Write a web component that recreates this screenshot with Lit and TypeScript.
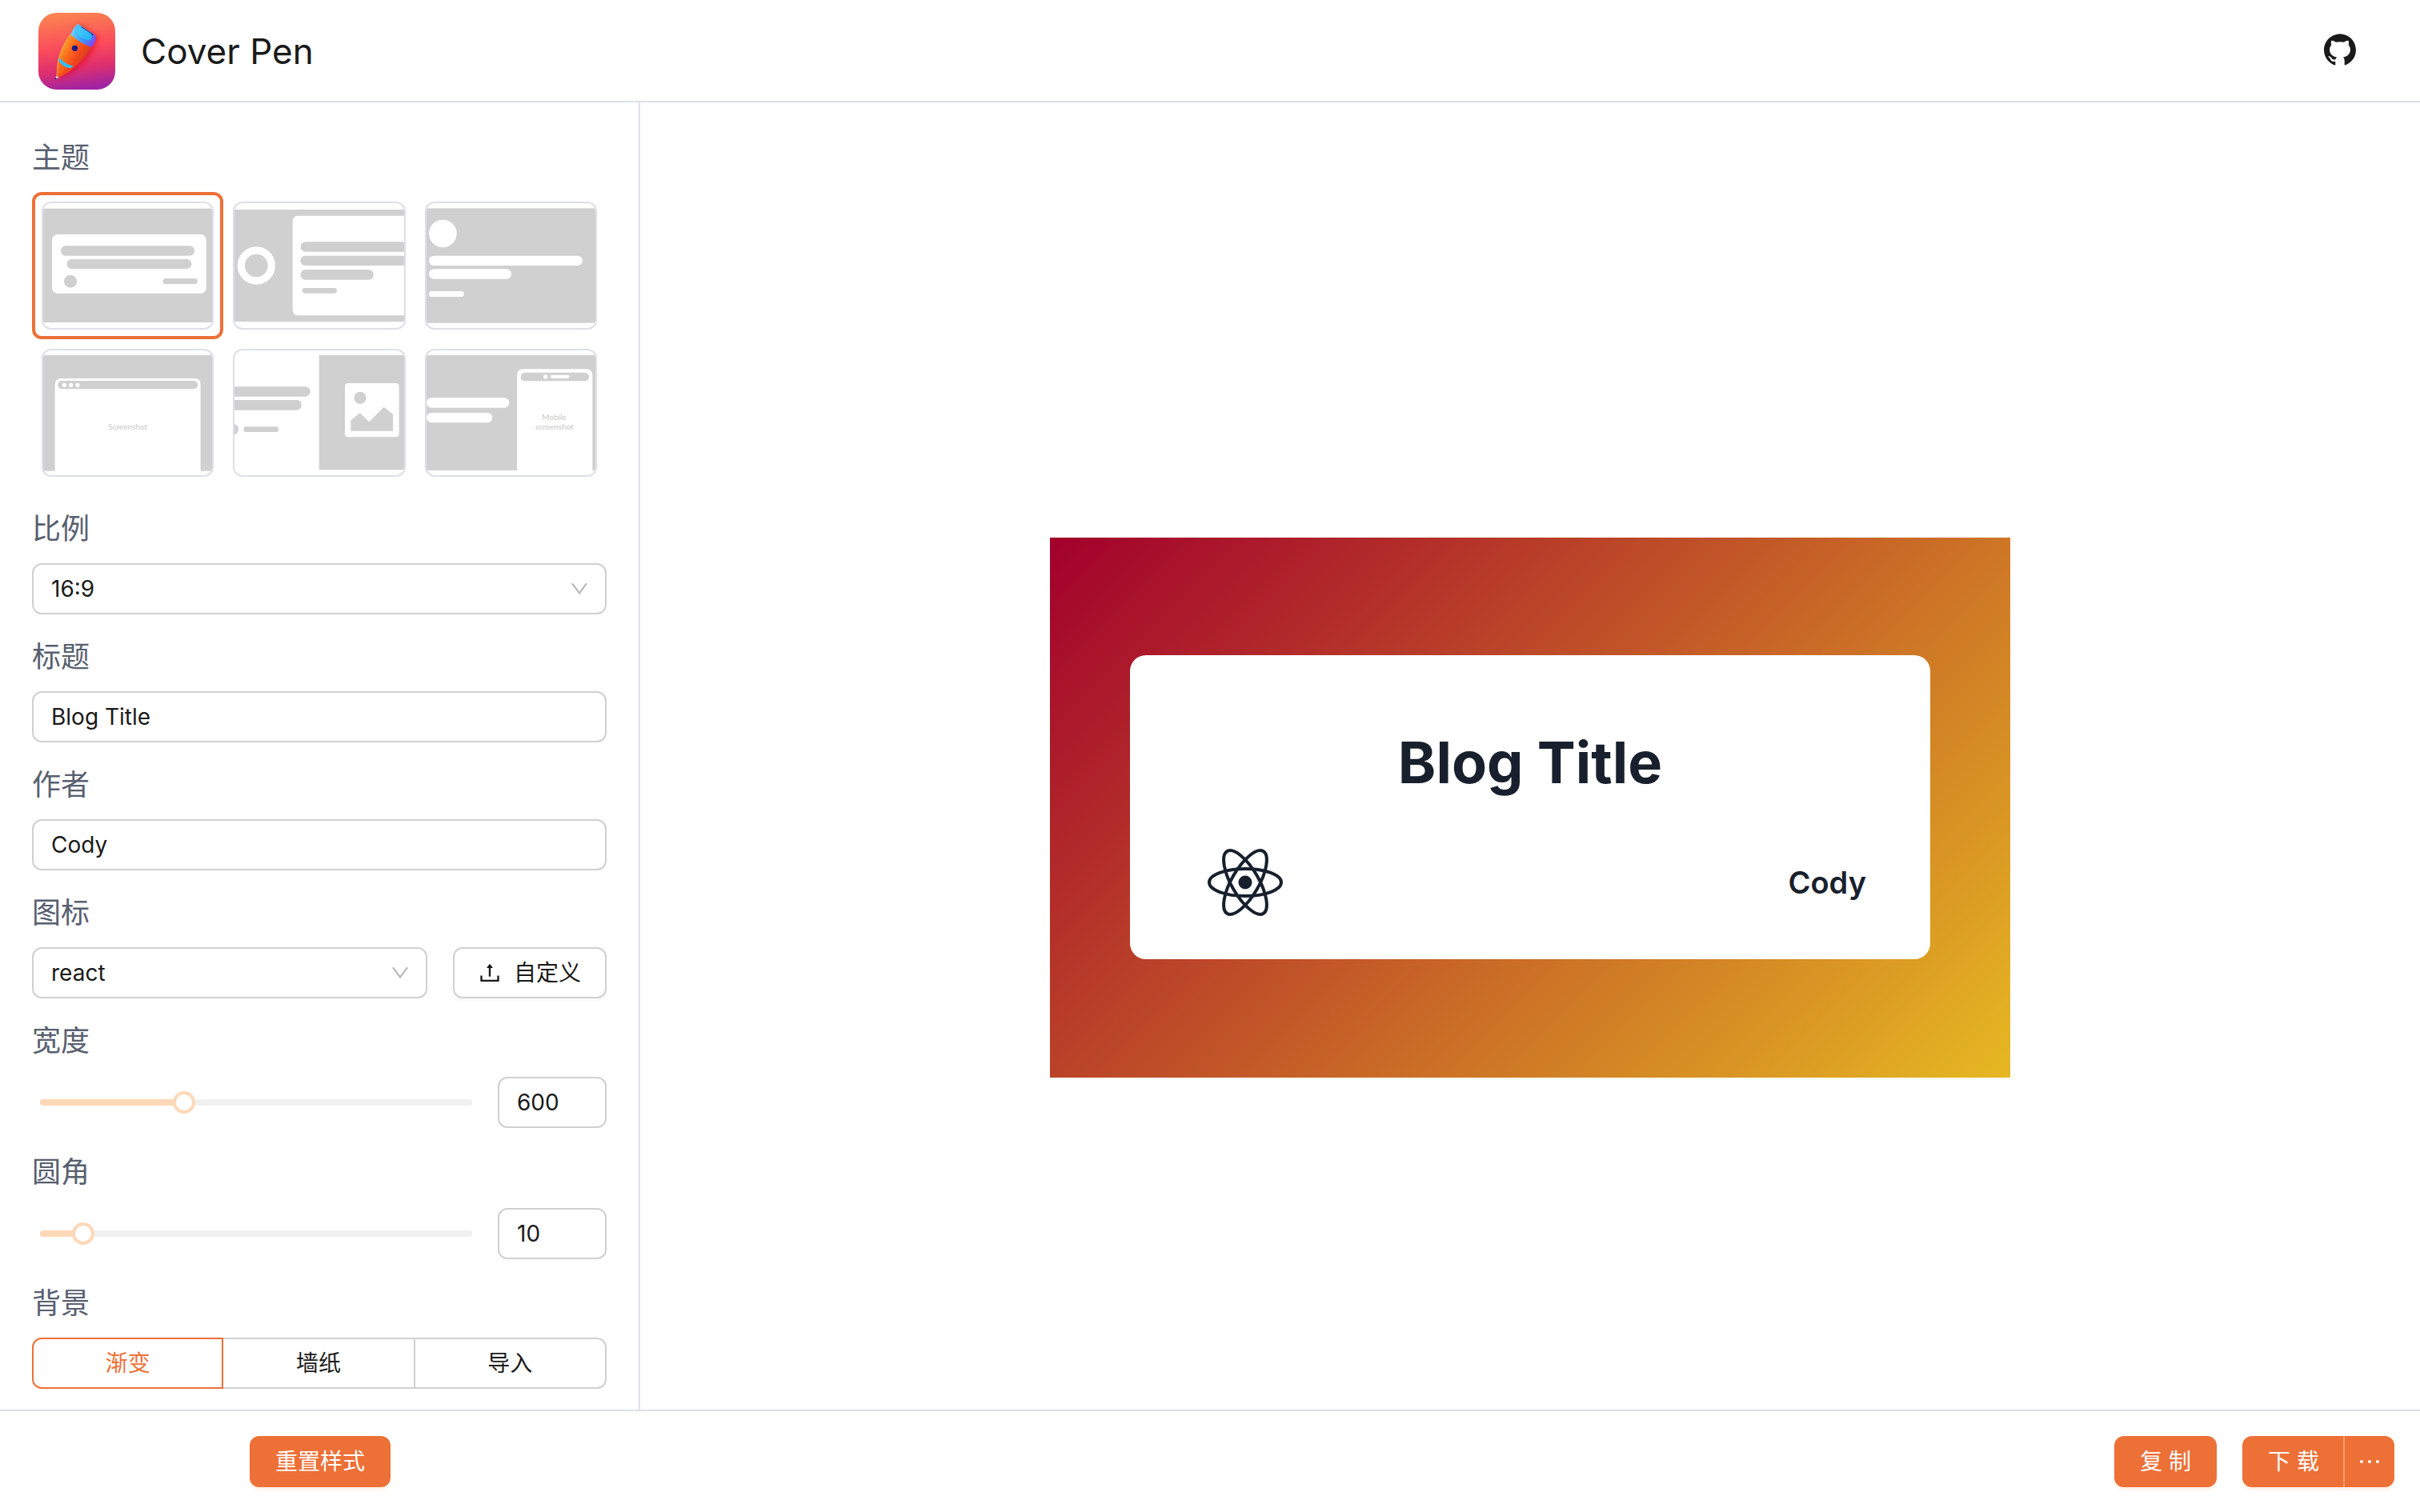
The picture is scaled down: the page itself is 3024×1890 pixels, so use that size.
import { LitElement, html, css, svg } from "lit";
import { customElement, state } from "lit/decorators.js";
import { classMap } from "lit/directives/class-map.js";

const DOWN =
  "M884 256h-75c-5.1 0-9.9 2.5-12.9 6.6L512 654.2 227.9 262.6c-3-4.1-7.8-6.6-12.9-6.6h-75c-6.5 0-10.3 7.4-6.5 12.7l352.6 486.1c12.8 17.6 39 17.6 51.7 0l352.6-486.1c3.9-5.3.1-12.7-6.4-12.7z";
const UPLOAD =
  "M400 317.7h73.9V656c0 4.4 3.6 8 8 8h60c4.4 0 8-3.6 8-8V317.7H624c6.7 0 10.4-7.7 6.3-12.9L518.3 163a8 8 0 00-12.6 0l-112 141.7c-4.1 5.3-.4 13 6.3 13zM878 626h-60c-4.4 0-8 3.6-8 8v154H214V634c0-4.4-3.6-8-8-8h-60c-4.4 0-8 3.6-8 8v198c0 17.7 14.3 32 32 32h684c17.7 0 32-14.3 32-32V634c0-4.4-3.6-8-8-8z";
const GITHUB =
  "M511.6 76.3C264.3 76.2 64 276.4 64 523.5 64 718.9 189.3 885 363.8 946c23.5 5.9 19.9-10.8 19.9-22.2v-77.5c-135.7 15.9-141.2-73.9-150.3-88.9C215 726 171.5 718 184.5 703c30.9-15.9 62.4 4 98.9 57.9 26.4 39.1 77.9 32.5 104 26 5.7-23.5 17.9-44.5 34.7-60.8-140.6-25.2-199.2-111-199.2-213 0-49.5 16.3-95 48.3-131.7-20.4-60.5 1.9-112.3 4.9-120 58.1-5.2 118.5 41.6 123.2 45.3 33-8.9 70.7-13.6 112.9-13.6 42.4 0 80.2 4.9 113.5 13.9 11.3-8.6 67.3-48.8 121.3-43.9 2.9 7.7 24.7 58.3 5.5 118 32.4 36.8 48.9 82.7 48.9 132.3 0 102.2-59 188.1-200 212.9a127.5 127.5 0 0138.1 91v112.5c.8 9 0 17.9 15 17.9 177.1-59.7 304.6-227 304.6-424.1 0-247.2-200.4-447.3-447.5-447.3z";

const icon = (path: string, name: string) => html`
  <svg class=${name} viewBox="64 64 896 896" fill="currentColor" aria-hidden="true"><path d=${path}></path></svg>
`;

const logo = html`
  <svg class="logo" viewBox="0 0 288 288" aria-hidden="true">
    <defs>
      <linearGradient id="bg" x1="0.42" y1="0" x2="0.56" y2="1">
        <stop offset="0" stop-color="#fb8350"></stop>
        <stop offset="0.45" stop-color="#fa4a5c"></stop>
        <stop offset="0.72" stop-color="#df2f6e"></stop>
        <stop offset="1" stop-color="#9d23a6"></stop>
      </linearGradient>
      <linearGradient id="body" gradientUnits="userSpaceOnUse" x1="88" y1="120" x2="170" y2="170">
        <stop offset="0" stop-color="#fba22c"></stop>
        <stop offset="0.4" stop-color="#fb6a1c"></stop>
        <stop offset="0.75" stop-color="#f9491c"></stop>
        <stop offset="1" stop-color="#d8401f"></stop>
      </linearGradient>
      <linearGradient id="cap" gradientUnits="userSpaceOnUse" x1="128" y1="64" x2="208" y2="112">
        <stop offset="0" stop-color="#6fd0fb"></stop>
        <stop offset="0.55" stop-color="#3f9cfb"></stop>
        <stop offset="1" stop-color="#7a49f5"></stop>
      </linearGradient>
      <linearGradient id="shine" gradientUnits="userSpaceOnUse" x1="140" y1="56" x2="196" y2="98">
        <stop offset="0" stop-color="#4fcbff"></stop>
        <stop offset="1" stop-color="#22b4f5"></stop>
      </linearGradient>
      <filter id="soft" x="-40%" y="-40%" width="180%" height="180%"><feGaussianBlur stdDeviation="9"></feGaussianBlur></filter>
      <clipPath id="tile"><rect width="288" height="288" rx="68"></rect></clipPath>
    </defs>
    <g clip-path="url(#tile)">
      <rect width="288" height="288" fill="url(#bg)"></rect>
      <path d="M152 42L226 92L206 140C180 186 140 220 76 246L90 170Z" fill="#e8001c" opacity="0.6" filter="url(#soft)"></path>
      <path d="M121 80C98 110 76 150 71 196L68 240L74 243C96 234 118 220 138 200C166 178 188 150 200 128Z" fill="url(#body)"></path>
      <path d="M121 80C98 110 78 150 72 196L69 238" fill="none" stroke="#fdc04c" stroke-width="3" opacity="0.7"></path>
      <path d="M158 146C142 178 112 216 76 240" fill="none" stroke="#d93818" stroke-width="8" opacity="0.35"></path>
      <path d="M79 168C92 184 110 195 131 199L121 208C102 206 86 196 76 180Z" fill="#35bdf3"></path>
      <path d="M68 236L77 242L65 249L61 251Z" fill="#d9c7d8"></path>
      <path d="M64 243L69 248L61 251Z" fill="#2b1c5a"></path>
      <path d="M146 42Q150 42 154 45L208 80Q217 87 216 94Q213 116 199 129Q158 116 120 81Q130 58 146 42Z" fill="url(#cap)"></path>
      <path d="M161 51L202 79L206 85L196 84L160 59Z" fill="#221a6c"></path>
      <path d="M148 48Q153 47 158 52L196 77Q203 82 200 91Q198 104 186 104Q160 98 143 82Q136 76 139 66Q142 54 148 48Z" fill="url(#shine)" stroke="#2d86e8" stroke-width="1"></path>
      <circle cx="136.500" cy="133" r="11" fill="#1b1a86"></circle>
    </g>
  </svg>
`;

interface Theme {
  name: string;
  box: string;
  art: unknown;
}

const G = "#d0d0d0";

const themes: Theme[] = [
  {
    name: "modern",
    box: "102 102 634 468",
    art: svg`
      <rect x="90" y="122" width="660" height="427" fill=${G} />
      <rect x="135" y="219" width="578" height="221" rx="20" fill="#fff" />
      <rect x="168" y="262" width="501" height="37" rx="18" fill=${G} />
      <rect x="190" y="312" width="468" height="36" rx="18" fill=${G} />
      <circle cx="204" cy="395" r="24" fill=${G} />
      <rect x="551" y="384" width="129" height="21" rx="10" fill=${G} />`,
  },
  {
    name: "stylish",
    box: "819 102 636 468",
    art: svg`
      <rect x="800" y="126" width="680" height="420" fill=${G} />
      <rect x="1038" y="149" width="480" height="374" rx="20" fill="#fff" />
      <circle cx="902" cy="336" r="57" fill="none" stroke="#fff" stroke-width="28" />
      <rect x="1068" y="247" width="400" height="37" rx="18" fill=${G} />
      <rect x="1067" y="299" width="400" height="37" rx="18" fill=${G} />
      <rect x="1068" y="351" width="273" height="38" rx="18" fill=${G} />
      <rect x="1074" y="420" width="130" height="20" rx="10" fill=${G} />`,
  },
  {
    name: "basic",
    box: "99 102 634 468",
    art: svg`
      <rect x="80" y="121" width="680" height="430" fill=${G} />
      <circle cx="160" cy="216" r="52" fill="#fff" />
      <rect x="108" y="299" width="576" height="37" rx="18" fill="#fff" />
      <rect x="108" y="349" width="309" height="37" rx="18" fill="#fff" />
      <rect x="108" y="432" width="131" height="21" rx="10" fill="#fff" />`,
  },
  {
    name: "preview",
    box: "102 54 634 468",
    art: svg`
      <rect x="90" y="72" width="660" height="434" fill=${G} />
      <path d="M146 540V182Q146 159 169 159H669Q692 159 692 182V540Z" fill="#fff" />
      <rect x="157" y="168" width="524" height="31" rx="15" fill=${G} />
      <circle cx="181" cy="184" r="8" fill="#fff" />
      <circle cx="206" cy="184" r="8" fill="#fff" />
      <circle cx="231" cy="184" r="8" fill="#fff" />
      <text class="art-text" x="419" y="351">Screenshot</text>`,
  },
  {
    name: "background",
    box: "819 54 636 468",
    art: svg`
      <rect x="1137" y="72" width="360" height="430" fill=${G} />
      <rect x="780" y="190" width="324" height="37" rx="18" fill=${G} />
      <rect x="780" y="240" width="291" height="38" rx="18" fill=${G} />
      <circle cx="814" cy="350" r="21" fill=${G} />
      <rect x="854" y="340" width="131" height="20" rx="10" fill=${G} />
      <rect x="1234" y="177" width="203" height="202" rx="12" fill="#fff" />
      <circle cx="1291" cy="232" r="23" fill=${G} />
      <path d="M1256 356V316L1290 289L1325 322L1380 266L1414 293V356Z" fill=${G} />`,
  },
  {
    name: "mobile",
    box: "99 54 634 468",
    art: svg`
      <rect x="80" y="72" width="680" height="432" fill=${G} />
      <rect x="99" y="232" width="310" height="37" rx="18" fill="#fff" />
      <rect x="99" y="288" width="247" height="37" rx="18" fill="#fff" />
      <path d="M438 540V148Q438 124 462 124H697Q721 124 721 148V540Z" fill="#fff" />
      <rect x="452" y="137" width="256" height="32" rx="16" fill=${G} />
      <circle cx="545" cy="153" r="8" fill="#fff" />
      <rect x="564" y="146" width="70" height="13" rx="5" fill="#fff" />
      <text class="art-text" x="577" y="314">Mobile</text>
      <text class="art-text" x="579" y="350">screenshot</text>`,
  },
];

const backgrounds = ["渐变", "墙纸", "导入"];

@customElement("app-root")
export class AppRoot extends LitElement {
  @state() private theme = "modern";
  @state() private heading = "Blog Title";
  @state() private author = "Cody";
  @state() private coverWidth = 600;
  @state() private radius = 10;
  @state() private background = "渐变";

  static styles = css`
    :host {
      display: block;
      color: #1a1a1a;
      background: #fff;
      font-family: Inter, "Noto Sans CJK SC", "Liberation Sans", sans-serif;
      font-size: 28px;
      line-height: 44px;
    }
    *, *::before, *::after { box-sizing: border-box; }
    svg { display: block; }
    button, input, select { font: inherit; color: inherit; margin: 0; }
    button { cursor: pointer; }

    .page { display: grid; grid-template-rows: auto 1fr auto; min-height: 100vh; }
    .header {
      display: flex; align-items: center; justify-content: space-between;
      padding: 16px 80px 14px 48px; border-bottom: 2px solid #dde0e7;
    }
    .brand { display: flex; align-items: center; gap: 32px; }
    .logo { width: 96px; height: 96px; }
    .brand-name { margin: 0; font-size: 44px; line-height: 64px; font-weight: 400; }
    .github { padding-bottom: 4px; color: #1a1a1a; }
    .github-icon { width: 40px; height: 40px; }

    .main { display: grid; grid-template-columns: 800px 1fr; }
    .sidebar { padding: 16px 40px 24px; border-right: 2px solid #dde0e7; }
    .field { margin: 0; padding: 0; border: 0; min-width: 0; }
    .label {
      display: block; padding: 25px 0 15px;
      font-size: 36px; line-height: 56px; color: #586070;
    }

    .themes { display: grid; grid-template-columns: repeat(3, 1fr); }
    .theme {
      padding: 8px; border: 4px solid transparent; border-radius: 12px; background: none;
    }
    .theme.active { border-color: #ed7037; }
    .thumb {
      width: 100%; height: 160px; border: 2px solid #dde0e7; border-radius: 12px; background: #fff;
    }
    .art-text {
      font-family: Lato, "Open Sans", sans-serif; font-size: 30px; fill: #c8c8c8; text-anchor: middle;
    }

    .box {
      width: 100%; height: 64px; padding: 0 22px;
      border: 2px solid #d0d0d0; border-radius: 12px; background: #fff; outline: none;
    }
    .select { display: grid; align-items: center; flex: 1; }
    .select > * { grid-area: 1 / 1; }
    .select .box { appearance: none; }
    .chevron {
      justify-self: end; width: 24px; height: 24px; margin-right: 22px;
      color: #b8b8b8; pointer-events: none;
    }
    .row { display: flex; align-items: center; gap: 32px; }
    .upload {
      display: flex; align-items: center; gap: 16px; height: 64px; padding: 0 30px;
      border: 2px solid #d0d0d0; border-radius: 12px; background: #fff;
      box-shadow: 0 4px 0 rgba(0, 0, 0, 0.02); white-space: nowrap;
    }
    .upload-icon { width: 28px; height: 28px; }

    .slider-row { min-height: 68px; padding-left: 10px; }
    .slider { display: grid; align-items: center; flex: 1; }
    .slider > * { grid-area: 1 / 1; }
    .rail { height: 8px; border-radius: 4px; background: #f0f0f0; overflow: hidden; }
    .fill { height: 8px; background: #ffd8b8; }
    .range { appearance: none; height: 28px; margin: 0 -14px; background: none; outline: none; }
    .range::-webkit-slider-thumb {
      appearance: none; width: 28px; height: 28px;
      border: 4px solid #ffd8b8; border-radius: 50%; background: #fff;
    }
    .number { flex: none; width: 136px; appearance: textfield; }
    .number::-webkit-inner-spin-button { appearance: none; margin: 0; }

    .segments { display: grid; grid-template-columns: repeat(3, 1fr); }
    .segment {
      display: flex; align-items: center; justify-content: center; height: 64px;
      border: 2px solid #d0d0d0; border-left-width: 0; cursor: pointer;
    }
    .segment:first-child { border-left-width: 2px; border-radius: 12px 0 0 12px; }
    .segment:last-child { border-radius: 0 12px 12px 0; }
    .segment.active { border-color: #ed7037; color: #ed7037; }
    .segment input { appearance: none; width: 0; height: 0; }

    .stage { display: grid; place-items: center; padding-top: 128px; }
    .cover {
      display: grid; place-items: center; aspect-ratio: 16 / 9;
      background: linear-gradient(135deg, #a2002c, #e6b822);
    }
    .card {
      width: 1000px; padding: 80px 80px 32px; border-radius: 20px;
      background: #fff; color: #18202d;
    }
    .cover-title { margin: 0 0 32px; font-size: 72px; line-height: 108px; font-weight: 700; text-align: center; }
    .card-foot { display: flex; align-items: center; justify-content: space-between; }
    .react { width: 128px; height: 128px; }
    .cover-author { margin: 0; font-size: 38px; line-height: 56px; font-weight: 600; }

    .footer {
      display: grid; grid-template-columns: 800px 1fr; align-items: center;
      min-height: 128px; border-top: 2px solid #dde0e7;
    }
    .reset { display: flex; justify-content: center; }
    .actions { display: flex; justify-content: flex-end; gap: 32px; padding-right: 32px; }
    .primary {
      height: 64px; padding: 0 32px; border: 0; border-radius: 12px;
      background: #ed7037; color: #fff; box-shadow: 0 4px 0 #fff5ec; white-space: nowrap;
    }
    .split { display: flex; }
    .split .primary:first-child { padding-right: 30px; border-radius: 12px 0 0 12px; border-right: 2px solid #ff9d60; }
    .split .primary:last-child { border-radius: 0 12px 12px 0; padding: 0 15px; }
    .more-icon { width: 32px; height: 32px; }
  `;

  private slider(id: string, label: string, value: number, min: number, max: number, set: (n: number) => void) {
    const onInput = (e: Event) => set(Number((e.target as HTMLInputElement).value));
    return html`
      <div class="field">
        <label class="label" for=${id}>${label}</label>
        <div class="row slider-row">
          <div class="slider">
            <div class="rail"><div class="fill" style="width:${((value - min) / (max - min)) * 100}%"></div></div>
            <input class="range" id=${id} type="range" min=${min} max=${max} .value=${String(value)} @input=${onInput} />
          </div>
          <input class="box number" type="number" aria-label=${label} .value=${String(value)} @change=${onInput} />
        </div>
      </div>
    `;
  }

  render() {
    return html`
      <div class="page">
        <header class="header">
          <div class="brand">${logo}<h1 class="brand-name">Cover Pen</h1></div>
          <a class="github" href="#" aria-label="GitHub">${icon(GITHUB, "github-icon")}</a>
        </header>

        <main class="main">
          <form class="sidebar" @submit=${(e: Event) => e.preventDefault()}>
            <div class="field">
              <span class="label" id="theme-label">主题</span>
              <div class="themes" role="group" aria-labelledby="theme-label">
                ${themes.map(
                  (t) => html`
                    <button
                      type="button"
                      class=${classMap({ theme: true, active: t.name === this.theme })}
                      aria-label=${t.name}
                      aria-pressed=${t.name === this.theme}
                      @click=${() => (this.theme = t.name)}
                    >
                      <svg class="thumb" viewBox=${t.box} preserveAspectRatio="xMidYMid slice">${t.art}</svg>
                    </button>
                  `
                )}
              </div>
            </div>

            <div class="field">
              <label class="label" for="ratio">比例</label>
              <div class="select">
                <select class="box" id="ratio"><option>16:9</option></select>
                ${icon(DOWN, "chevron")}
              </div>
            </div>

            <div class="field">
              <label class="label" for="heading">标题</label>
              <input class="box" id="heading" type="text" .value=${this.heading}
                @input=${(e: Event) => (this.heading = (e.target as HTMLInputElement).value)} />
            </div>

            <div class="field">
              <label class="label" for="author">作者</label>
              <input class="box" id="author" type="text" .value=${this.author}
                @input=${(e: Event) => (this.author = (e.target as HTMLInputElement).value)} />
            </div>

            <div class="field">
              <label class="label" for="icon">图标</label>
              <div class="row">
                <div class="select">
                  <select class="box" id="icon"><option>react</option></select>
                  ${icon(DOWN, "chevron")}
                </div>
                <button class="upload" type="button">${icon(UPLOAD, "upload-icon")}<span>自定义</span></button>
              </div>
            </div>

            ${this.slider("width", "宽度", this.coverWidth, 300, 1200, (n) => (this.coverWidth = n))}
            ${this.slider("radius", "圆角", this.radius, 0, 100, (n) => (this.radius = n))}

            <div class="field">
              <span class="label" id="background-label">背景</span>
              <div class="segments" role="radiogroup" aria-labelledby="background-label">
                ${backgrounds.map(
                  (b) => html`
                    <label class=${classMap({ segment: true, active: b === this.background })}>
                      <input type="radio" name="background" .checked=${b === this.background}
                        @change=${() => (this.background = b)} />${b}
                    </label>
                  `
                )}
              </div>
            </div>
          </form>

          <section class="stage">
            <div class="cover" style="width:${this.coverWidth * 2}px">
              <div class="card" style="border-radius:${this.radius * 2}px">
                <h2 class="cover-title">${this.heading}</h2>
                <div class="card-foot">
                  <svg class="react" viewBox="-64 -64 128 128" fill="none" stroke="currentColor" stroke-width="4" aria-hidden="true">
                    <circle r="8.500" fill="currentColor" stroke="none"></circle>
                    <ellipse rx="45" ry="17"></ellipse>
                    <ellipse rx="45" ry="17" transform="rotate(60)"></ellipse>
                    <ellipse rx="45" ry="17" transform="rotate(120)"></ellipse>
                  </svg>
                  <p class="cover-author">${this.author}</p>
                </div>
              </div>
            </div>
          </section>
        </main>

        <footer class="footer">
          <div class="reset"><button class="primary" type="button">重置样式</button></div>
          <div class="actions">
            <button class="primary" type="button">复 制</button>
            <div class="split">
              <button class="primary" type="button">下 载</button>
              <button class="primary" type="button" aria-label="更多">
                <svg class="more-icon" viewBox="64 64 896 896" fill="currentColor" aria-hidden="true">
                  <circle cx="232" cy="511" r="56"></circle>
                  <circle cx="512" cy="511" r="56"></circle>
                  <circle cx="792" cy="511" r="56"></circle>
                </svg>
              </button>
            </div>
          </div>
        </footer>
      </div>
    `;
  }
}
